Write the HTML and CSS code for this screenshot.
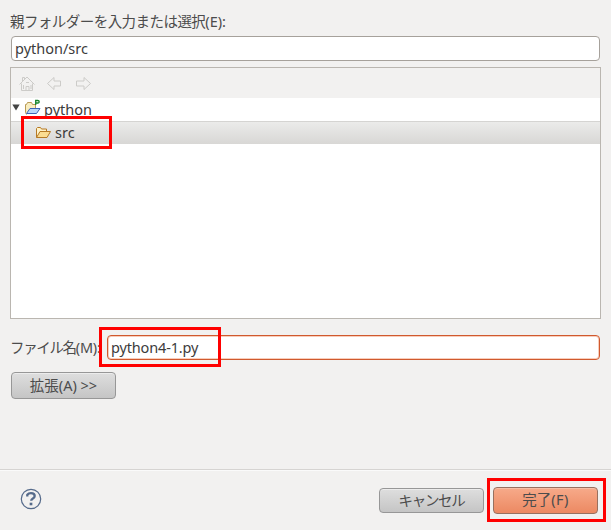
FILE: index.html
```html
<!DOCTYPE html>
<html lang="ja">
<head>
<meta charset="utf-8">
<title>python</title>
<link rel="stylesheet" href="styles.css">
</head>
<body>
<main class="dialog">
  <label class="parent-label"><span class="jp">親フォルダーを入力または選択</span>(E):</label>
  <div class="field parent-field"><span class="t-path">python/src</span></div>
  <section class="tree">
    <div class="toolbar">
      <svg width="80" height="20" viewBox="0 0 80 20" fill="none" stroke="#cccbc8">
        <path d="M3.500 9.500v7h11v-7M1.500 10.500 9 3l7.500 7.500M4.500 7V3.500h2V5M8 16.500v-4h3v4M5.500 11v4M13 11v4M8 8.500h3" />
        <path d="M29.500 9.500 36 3.500v3.500h6.500v5H36v3.500zM72.500 9.500 66 3.500v3.500h-7.500v5H66v3.500z" />
      </svg>
    </div>
    <div class="row root">
      <svg class="arrow" width="8" height="7" viewBox="0 0 8 7"><path d="M.3.500h7.400L4 6.500z" fill="#444"/></svg>
      <svg class="proj" width="17" height="17" viewBox="0 0 17 17">
        <path d="M2.500 15.500l-1-2v-8h1l1-2h4l1 2h3v4" fill="#f8edc0" stroke="#b99a55"/>
        <path d="M2.500 14.500 6 9.500h10l-3.500 5z" fill="#b9d9fb" stroke="#3f65b5"/>
        <path d="M11.700 6V1.500h2q1.500 0 1.500 1.300T13.700 4H12" fill="none" stroke="#17852a" stroke-width="1.300"/>
      </svg>
      <span class="t-root">python</span>
    </div>
    <div class="row child">
      <svg class="folder" width="17" height="13" viewBox="0 0 17 13">
        <path d="M1.500 11.500v-9l1-1h3l1 1.500h5v2.500" fill="#fff3c9" stroke="#b67925"/>
        <path d="M1.500 11.500 5 5.500h10.500l-3.500 6z" fill="#fbdc91" stroke="#b67925"/>
      </svg>
      <span class="t-src">src</span>
    </div>
  </section>
  <div class="name-row">
    <label class="name-label"><span class="jp">ファイル名</span>(M):</label>
    <div class="field name-field"><span class="t-file">python4-1.py</span></div>
  </div>
  <button class="btn advanced"><span class="jp">拡張</span>(A) &gt;&gt;</button>
  <footer class="footer">
    <svg class="help" width="22" height="22" viewBox="0 0 22 22" fill="none" stroke="#566b8b">
      <circle cx="11" cy="11" r="9.700" stroke-width="1.200"/>
      <path d="M7.300 8.500V6.800q1.200-1.600 3.700-1.600 3.700 0 3.700 2.700 0 1.500-1.800 2.500-1.700 1-1.700 2.300" stroke-width="2.300"/>
      <path d="M11 14.700v2.600" stroke-width="2.700"/>
    </svg>
    <button class="btn cancel"><span class="jp">キャンセル</span></button>
    <button class="btn finish"><span class="jp">完了</span>(F)</button>
  </footer>
  <div class="mark mark-src"></div>
  <div class="mark mark-file"></div>
  <div class="mark mark-finish"></div>
</main>
</body>
</html>
```
FILE: styles.css
```css
* { box-sizing: border-box; }
body {
  margin: 0;
  background: #f2f1f0;
  color: #3c3c3c;
  font: 14.5px/20px "Noto Sans", "Noto Sans CJK JP", sans-serif;
}
.dialog {
  position: relative;
  display: flex;
  flex-direction: column;
  width: 611px;
  height: 530px;
  padding: 11px 10px 0;
  overflow: hidden;
}
label, .field, .row, .btn { white-space: nowrap; }
label { color: #4c4c4c; }
.jp { font-family: "Noto Sans CJK JP", sans-serif; font-size: 14.5px; letter-spacing: -0.55px; }
.parent-label { height: 20px; margin-bottom: 5px; }
.field {
  height: 25px;
  padding: 0 3px;
  border: 1px solid #a6a19b;
  border-radius: 4px;
  background: #fff;
  line-height: 22px;
}
.parent-field { margin: 0 1px 6px; }
.tree { height: 252px; border: 1px solid #bab6b0; background: #fff; }
.toolbar { height: 30px; padding: 6px 0 0 7px; background: #f2f1f0; }
.row { display: flex; align-items: center; height: 23px; }
.t-root { margin-top: -2px; }
.t-src { margin-top: -2px; }
.t-file { letter-spacing: -0.15px; }
.arrow { margin: -5px 5px 0 1px; }
.proj { margin: -4px 3px 0 -1px; }
.child {
  padding-left: 24px;
  border-top: 1px solid #d5d4d2;
  background: linear-gradient(#ebebea, #d8d7d5);
}
.folder { margin: -2px 3px 0 0; }
.name-row { display: flex; align-items: center; margin-top: 16px; }
.name-label { width: 97px; margin-top: -2px; letter-spacing: -0.2px; }
.name-label .jp { letter-spacing: -1.35px; }
.name-field {
  width: 493px;
  border-color: #d0592e;
  box-shadow: inset 0 0 0 1px #f8cdbb;
}
.btn {
  width: 105px;
  height: 27px;
  padding: 0 0 2px;
  border: 1px solid #979797;
  border-radius: 4px;
  background: linear-gradient(#dedede, #c5c5c5);
  box-shadow: inset 0 1px #ececec;
  color: #4c4c4c;
  font: 14.5px/22px "Noto Sans", sans-serif;
}
.btn .jp { letter-spacing: 0; }
.advanced { margin: 12px 0 0 1px; }
.footer {
  display: flex;
  align-items: center;
  height: 61px;
  margin: 70px -10px 0;
  padding-left: 20px;
  border-top: 1px solid #d6d4d2;
  box-shadow: inset 0 1px #fafafa;
}
.help { margin-top: -2px; }
.cancel { height: 25px; margin: 0 9px 0 337px; }
.cancel .jp { letter-spacing: -1.3px; }
.finish {
  border-color: #98705f;
  background: linear-gradient(#f7aa8a, #ec8962);
  box-shadow: inset 0 1px #f8bda5;
}
.finish { letter-spacing: 0.4px; }
.mark { position: absolute; border: 3px solid #f00; }
.mark-src { left: 21px; top: 116px; width: 91px; height: 33px; }
.mark-file { left: 99px; top: 327px; width: 122px; height: 40px; }
.mark-finish { left: 487px; top: 478px; width: 119px; height: 44px; }
```
